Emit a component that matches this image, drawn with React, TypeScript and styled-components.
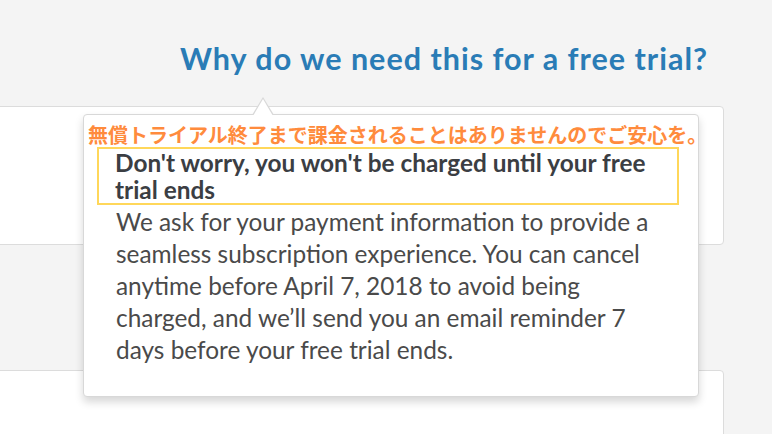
import styled, { createGlobalStyle } from 'styled-components'

const GlobalStyle = createGlobalStyle`
  html, body {
    margin: 0;
    padding: 0;
    background: #f4f4f4;
    overflow: hidden;
  }
  * {
    box-sizing: border-box;
  }
`

export default function App() {
  return (
    <>
      <GlobalStyle />
      <Page>
        <Question>Why do we need this for a free trial?</Question>
        <TopCard />
        <BottomCard />
        <Popover>
          <Arrow />
          <Note>無償トライアル終了まで課金されることはありませんのでご安心を。</Note>
          <Highlight>
            <PopTitle>Don't worry, you won't be charged until your free trial ends</PopTitle>
          </Highlight>
          <PopBody>
            We ask for your payment information to provide a seamless subscription experience. You can cancel
            anytime before April 7, 2018 to avoid being charged, and we’ll send you an email reminder 7 days
            before your free trial ends.
          </PopBody>
        </Popover>
      </Page>
    </>
  )
}

const Page = styled.div`
  position: relative;
  width: 772px;
  height: 434px;
  padding-top: 40px;
  font-family: Lato, 'Noto Sans', sans-serif;
  overflow: hidden;
`

const Question = styled.h2`
  margin: 0 64px 0 0;
  text-align: right;
  font-size: 30.5px;
  letter-spacing: 1px;
  line-height: 36px;
  font-weight: 700;
  color: #2a7cb6;
`

const Card = styled.div`
  width: 729px;
  margin-left: -5px;
  background: #fff;
  border: 1px solid #dcdcdc;
  border-radius: 4px;
`

const TopCard = styled(Card)`
  height: 139px;
  margin-top: 30px;
`

const BottomCard = styled(Card)`
  height: 120px;
  margin-top: 125px;
`

const Popover = styled.div`
  position: absolute;
  left: 83px;
  top: 114px;
  width: 616px;
  height: 283px;
  padding: 8px 4px 0;
  background: #fff;
  border: 1px solid #d8d8d8;
  border-radius: 4px;
  box-shadow: 0 5px 9px rgba(0, 0, 0, 0.16);
`

const Arrow = styled.div`
  position: absolute;
  left: 168px;
  top: -18px;
  width: 22px;
  height: 18px;
  background: #d8d8d8;
  clip-path: polygon(50% 0, 100% 100%, 0 100%);

  &::after {
    content: '';
    position: absolute;
    left: 1px;
    top: 2px;
    width: 20px;
    height: 17px;
    background: #fff;
    clip-path: polygon(50% 0, 100% 100%, 0 100%);
  }
`

const Note = styled.div`
  font-family: 'Noto Sans CJK JP', sans-serif;
  font-size: 20px;
  line-height: 24px;
  font-weight: 700;
  color: #ff8b3d;
  white-space: nowrap;
`

const Highlight = styled.div`
  margin: 0 15px 0 9px;
  padding: 0 8px 0 16px;
  border: 2px solid #ffd75a;
`

const PopTitle = styled.h3`
  margin: 0;
  font-size: 24.4px;
  line-height: 27px;
  font-weight: 700;
  color: #3b3e43;
`

const PopBody = styled.p`
  margin: 1px 0 0;
  padding: 0 30px 0 28px;
  font-size: 24.4px;
  line-height: 32px;
  color: #4a4a4a;
`
